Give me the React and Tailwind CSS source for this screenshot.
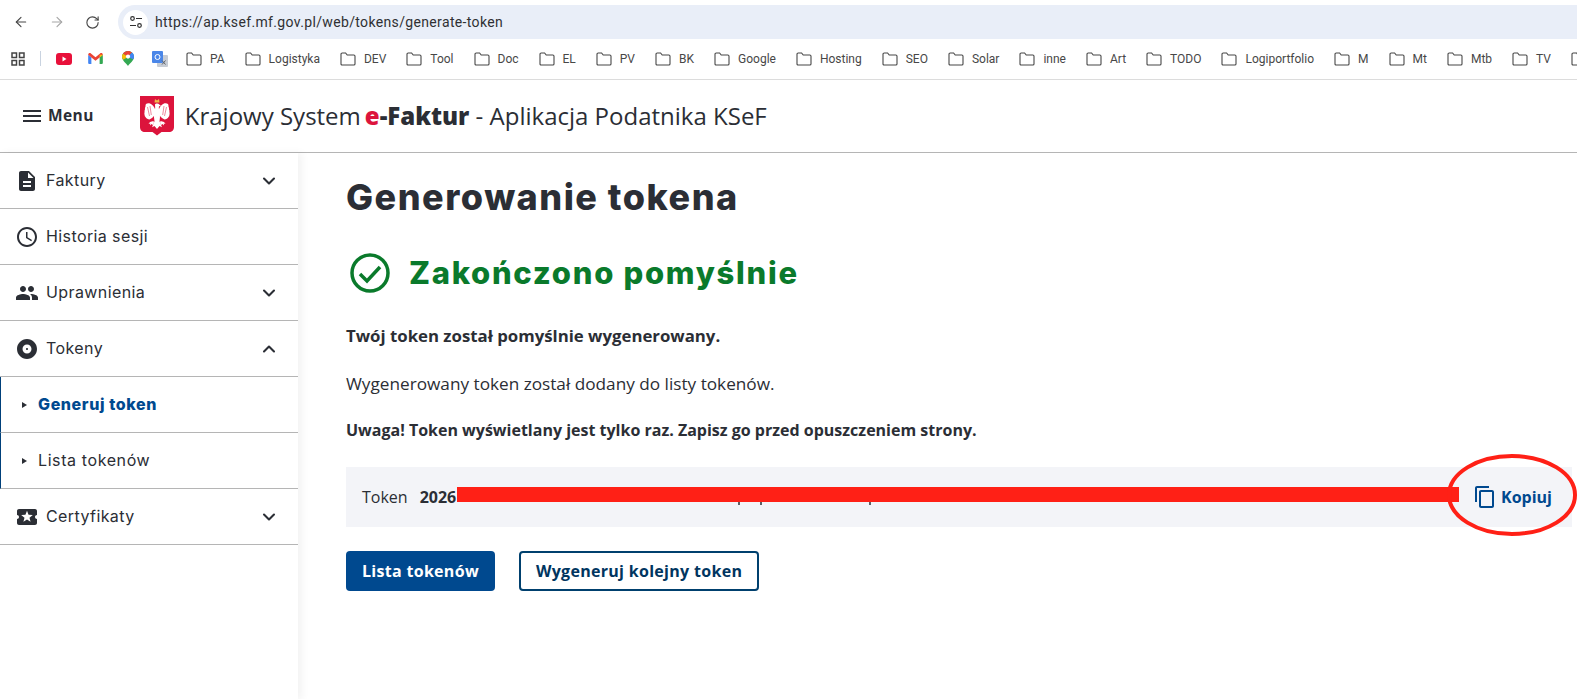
import React from 'react';
import { ArrowLeft, ArrowRight, RotateCw, ChevronDown, ChevronUp } from 'lucide-react';

const bookmarks = ['PA', 'Logistyka', 'DEV', 'Tool', 'Doc', 'EL', 'PV', 'BK', 'Google', 'Hosting', 'SEO', 'Solar', 'inne', 'Art', 'TODO', 'Logiportfolio', 'M', 'Mt', 'Mtb', 'TV'];

const Mi = ({ d, className }) => (
  <svg viewBox="0 0 24 24" fill="currentColor" className={className}><path d={d} /></svg>
);

const icons = {
  menu: 'M3 18h18v-2H3v2zm0-5h18v-2H3v2zm0-7v2h18V6H3z',
  doc: 'M14 2H6c-1.1 0-1.99.9-1.99 2L4 20c0 1.1.89 2 1.99 2H18c1.1 0 2-.9 2-2V8l-6-6zm2 16H8v-2h8v2zm0-4H8v-2h8v2zm-3-5V3.5L18.5 9H13z',
  clock: 'M11.99 2C6.47 2 2 6.48 2 12s4.47 10 9.99 10C17.52 22 22 17.52 22 12S17.52 2 11.99 2zM12 20c-4.42 0-8-3.58-8-8s3.58-8 8-8 8 3.58 8 8-3.58 8-8 8zm.5-13H11v6l5.25 3.15.75-1.23-4.5-2.67z',
  people: 'M16 11c1.66 0 2.99-1.34 2.99-3S17.66 5 16 5c-1.66 0-3 1.34-3 3s1.34 3 3 3zm-8 0c1.66 0 2.99-1.34 2.99-3S9.66 5 8 5C6.34 5 5 6.34 5 8s1.34 3 3 3zm0 2c-2.33 0-7 1.17-7 3.5V19h14v-2.5c0-2.33-4.67-3.5-7-3.5zm8 0c-.29 0-.62.02-.97.05 1.16.84 1.97 1.97 1.97 3.45V19h6v-2.5c0-2.33-4.67-3.5-7-3.5z',
  album: 'M12 2C6.48 2 2 6.48 2 12s4.48 10 10 10 10-4.48 10-10S17.52 2 12 2zm0 14.5c-2.49 0-4.5-2.01-4.5-4.5S9.51 7.5 12 7.5s4.5 2.01 4.5 4.5-2.01 4.5-4.5 4.5zm0-5.5c-.55 0-1 .45-1 1s.45 1 1 1 1-.45 1-1-.45-1-1-1z',
  ticket: 'M20 12c0-1.1.9-2 2-2V6c0-1.1-.9-2-2-2H4c-1.1 0-1.99.9-1.99 2v4c1.1 0 1.99.9 1.99 2s-.89 2-2 2v4c0 1.1.9 2 2 2h16c1.1 0 2-.9 2-2v-4c-1.1 0-2-.9-2-2zm-4.42 4.8L12 14.5l-3.58 2.3 1.08-4.12-3.29-2.69 4.24-.25L12 5.8l1.54 3.95 4.24.25-3.29 2.69 1.09 4.11z',
  copy: 'M16 1H4c-1.1 0-2 .9-2 2v14h2V3h12V1zm3 4H8c-1.1 0-2 .9-2 2v14c0 1.1.9 2 2 2h11c1.1 0 2-.9 2-2V7c0-1.1-.9-2-2-2zm0 16H8V7h11v14z',
};

const menu = [
  { label: 'Faktury', icon: icons.doc, chevron: 'down' },
  { label: 'Historia sesji', icon: icons.clock },
  { label: 'Uprawnienia', icon: icons.people, chevron: 'down' },
  { label: 'Tokeny', icon: icons.album, chevron: 'up' },
  { label: 'Generuj token', sub: true, active: true },
  { label: 'Lista tokenów', sub: true },
  { label: 'Certyfikaty', icon: icons.ticket, chevron: 'down' },
];

const FolderIcon = () => (
  <svg viewBox="0 0 16 14" className="w-[16px] h-[14px] shrink-0" fill="none" stroke="#474747" strokeWidth="1.1">
    <path d="M1 12V2.2C1 1.500 1.500 1 2.200 1h3.400l1.600 2h6.600c.7 0 1.200.5 1.200 1.200V12c0 .6-.5 1-1.200 1H2.200C1.500 13 1 12.600 1 12z" />
  </svg>
);

// wing is drawn once and mirrored around the shield's middle
const Wing = ({ flip }) => (
  <g transform={flip ? 'translate(34 0) scale(-1 1)' : undefined}>
    <path d="M15 13c-1-2.500-2.500-4.500-5-5.500-1.500-.5-3-.3-4 .6-.6 1-.4 1.800-.6 3-.6.8-.4 1.600-.5 2.600-.5.8-.3 1.700-.3 2.600-.4.8-.2 1.700 0 2.600 0 .8.4 1.500.9 2.200.3.8.9 1.300 1.700 1.700.7.5 1.500.6 2.300.6l2.500-1.500 3-3z" fill="#fff" />
    <path d="M7.500 11l2 9M10 10l1.300 9" stroke="#dc143c" strokeWidth=".5" fill="none" />
    <path d="M13.500 25l-3.500 1-1.500 2 1.800-.4-.3 2 1.700-1.500 1 1 1.300-2z" fill="#fff" />
  </g>
);

const Emblem = () => (
  <svg viewBox="0 0 34 40" className="w-[34px] h-[40px] shrink-0">
    <path d="M0 0h34v31c0 3-2 5-5 5h-7.500L17 39.500 12.500 36H5c-3 0-5-2-5-5z" fill="#dc143c" />
    <path d="M14.500 6.500l.5-3.500 2 1.500 2-1.500.5 3.500z" fill="#f2b84b" />
    <Wing />
    <Wing flip />
    <path d="M15 8.500c.8-1.300 3.400-1.300 4.300 0l1.700 1.500-2 .3-.2 2c1.200 3 1.700 8 .7 13l2.500 6-2.500-1.200-2.500 3-2.500-3-2.500 1.200 2.500-6c-1-5-.5-10 .7-13z" fill="#fff" />
  </svg>
);

const App = () => {
  return (
    <div className="relative h-[699px] overflow-hidden bg-white text-[#2b2e35] font-['Open_Sans',sans-serif]">
      {/* Browser chrome */}
      <div className="flex items-center h-[44px] pl-[13px]">
        <ArrowLeft className="w-[16px] h-[16px] text-[#474747] mr-[20px]" strokeWidth={1.7} />
        <ArrowRight className="w-[16px] h-[16px] text-[#a6a6a6] mr-[20px]" strokeWidth={1.7} />
        <RotateCw className="w-[15px] h-[15px] text-[#474747] mr-[18px]" strokeWidth={1.8} />
        <div className="flex items-center flex-1 h-[34px] rounded-l-full bg-[#e9eef8] pl-[5px]">
          <div className="flex items-center justify-center w-[25px] h-[25px] rounded-full bg-white">
            <svg viewBox="0 0 14 14" className="w-[14px] h-[14px]" fill="none" stroke="#303030" strokeWidth="1.200">
              <circle cx="3.500" cy="3.500" r="1.800" /><path d="M7 3.500h6M1 10.500h6" /><circle cx="10.500" cy="10.500" r="1.800" />
            </svg>
          </div>
          <span className="ml-[7px] text-[14px] text-[#2f3033] font-['Roboto',sans-serif] tracking-[0.35px]">https://ap.ksef.mf.gov.pl/web/tokens/generate-token</span>
        </div>
      </div>
      <div className="flex items-center h-[36px] pb-[6px] pl-[11px] border-b border-[#dcdcdc] overflow-hidden whitespace-nowrap font-['Roboto',sans-serif] text-[12px] text-[#474747]">
        <svg viewBox="0 0 14 14" className="w-[14px] h-[14px] shrink-0" fill="none" stroke="#444" strokeWidth="1.500">
          <rect x="1" y="1" width="4.500" height="4.500" /><rect x="8.500" y="1" width="4.500" height="4.500" />
          <rect x="1" y="8.500" width="4.500" height="4.500" /><rect x="8.500" y="8.500" width="4.500" height="4.500" />
        </svg>
        <div className="w-[1px] h-[15px] bg-[#c9d3e0] ml-[15px] mr-[15px] shrink-0" />
        <svg viewBox="0 0 16 12" className="w-[16px] h-[12px] shrink-0 mr-[16px]">
          <rect width="16" height="12" rx="3" fill="#e8103a" /><path d="M6.500 3.500l4 2.500-4 2.500z" fill="#fff" />
        </svg>
        <svg viewBox="0 0 16 12" className="w-[15px] h-[11px] shrink-0 mr-[19px]">
          <path d="M0 2v9c0 .6.4 1 1 1h2.500V5z" fill="#4285f4" /><path d="M12.500 5v7H15c.6 0 1-.4 1-1V2z" fill="#34a853" />
          <path d="M0 2c0-2 2-2.500 3-1.500L8 4.500 13 .5C14-.5 16 0 16 2l-3.500 3L8 8.500 3.500 5z" fill="#ea4335" /><path d="M12.500 1.800L16 2l-3.500 3z" fill="#fbbc04" />
        </svg>
        <svg viewBox="0 0 12 15" className="w-[12px] h-[15px] shrink-0 mr-[18px]">
          <path d="M6 0C2.700 0 0 2.500 0 5.700 0 9.500 4.500 12.500 6 15c1.500-2.500 6-5.500 6-9.300C12 2.500 9.300 0 6 0z" fill="#34a853" />
          <path d="M1 2.800C2 1 3.900 0 6 0c1.500 0 3 .6 4 1.600L6 5.700z" fill="#ea4335" /><path d="M10 1.600c1.300 1 2 2.500 2 4.100 0 1-.3 2-.9 2.800L6 5.700z" fill="#4285f4" />
          <path d="M0 5.700C0 4.600.4 3.600 1 2.800l5 2.900-4.600 3.100C.6 7.700 0 6.800 0 5.700z" fill="#fbbc04" /><circle cx="6" cy="5.600" r="2.100" fill="#fff" />
        </svg>
        <svg viewBox="0 0 16 16" className="w-[16px] h-[16px] shrink-0 mr-[18px]">
          <rect x="5" y="4" width="11" height="12" rx="1" fill="#c7ccd4" /><rect width="11" height="12" rx="1" fill="#4a86e8" />
          <circle cx="5.500" cy="6" r="2.500" stroke="#fff" strokeWidth="1" fill="none" /><path d="M10 9.500l3.500 4M13.500 9.500l-3.500 4" stroke="#5f6368" strokeWidth="1" />
        </svg>
        <div className="flex items-center gap-[20px]">
          {bookmarks.map((b) => (
            <div key={b} className="flex items-center gap-[8px]">
              <FolderIcon />
              <span>{b}</span>
            </div>
          ))}
          <FolderIcon />
        </div>
      </div>

      {/* App header */}
      <header className="flex items-center h-[73px] pl-[20px] border-b border-[#b5b5b5]">
        <Mi d={icons.menu} className="w-[24px] h-[24px] shrink-0" />
        <span className="ml-[4px] text-[15.500px] font-bold tracking-[0.4px]">Menu</span>
        <div className="ml-[46px]"><Emblem /></div>
        <div className="ml-[11px] text-[24px] whitespace-nowrap">
          Krajowy System<span className="ml-[4px] font-extrabold"><span className="text-[#dc143c]">e</span>-Faktur</span> - Aplikacja Podatnika KSeF
        </div>
      </header>

      <div className="flex">
        {/* Sidebar */}
        <nav className="w-[298px] h-[547px] shrink-0 shadow-[4px_0_8px_rgba(0,0,0,0.05)] font-['Inter',sans-serif]">
          {menu.map((item) => (
            <div
              key={item.label}
              className={`flex items-center h-[56px] border-b border-[#b5b5b5] ${item.sub ? 'border-l-[1px] border-l-[#00407a] pl-[21px]' : 'pl-[15px]'} pr-[19px]`}
            >
              {item.sub ? (
                <>
                  <span className="w-0 h-0 border-y-[3px] border-y-transparent border-l-[5px] border-l-[#2b2e35]" />
                  <span className={`ml-[11px] pb-[2px] text-[16px] ${item.active ? 'font-extrabold text-[#00498f] tracking-[0.6px]' : 'tracking-[0.6px]'}`}>{item.label}</span>
                </>
              ) : (
                <>
                  <Mi d={item.icon} className="w-[24px] h-[24px] shrink-0" />
                  <span className="ml-[7px] pb-[2px] text-[16px] tracking-[0.4px]">{item.label}</span>
                  {item.chevron === 'down' && <ChevronDown className="ml-auto w-[20px] h-[20px]" strokeWidth={2.500} />}
                  {item.chevron === 'up' && <ChevronUp className="ml-auto w-[20px] h-[20px]" strokeWidth={2.500} />}
                </>
              )}
            </div>
          ))}
        </nav>

        {/* Content */}
        <main className="flex-1 pl-[48px] pr-[5px]">
          <h1 className="mt-[20px] text-[36px] leading-[48px] font-extrabold tracking-[1.5px] font-['Inter',sans-serif]">Generowanie tokena</h1>
          <div className="flex items-center mt-[32px]">
            <svg viewBox="0 0 40 40" className="ml-[4px] w-[40px] h-[40px] shrink-0" fill="none" stroke="#0a7a2b" strokeWidth="3.500">
              <circle cx="20" cy="20" r="18" /><path d="M10 21l7 7 13-14" />
            </svg>
            <h2 className="ml-[19px] text-[31px] leading-[40px] font-extrabold tracking-[1.7px] text-[#0a7a2b] font-['Inter',sans-serif]">Zakończono pomyślnie</h2>
          </div>
          <p className="mt-[31px] text-[16.800px] leading-[24px] font-bold">Twój token został pomyślnie wygenerowany.</p>
          <p className="mt-[24px] text-[17.200px] leading-[24px]">Wygenerowany token został dodany do listy tokenów.</p>
          <p className="mt-[22px] text-[16px] leading-[24px] font-bold">Uwaga! Token wyświetlany jest tylko raz. Zapisz go przed opuszczeniem strony.</p>
          <div className="flex items-center h-[60px] mt-[25px] pl-[16px] pr-[20px] bg-[#f3f4f8] text-[16px]">
            <span>Token</span>
            <span className="ml-[12px] font-bold">2026</span>
            <button className="ml-auto flex items-center gap-[4px] font-bold text-[#00498f]">
              <Mi d={icons.copy} className="w-[24px] h-[24px]" />
              Kopiuj
            </button>
          </div>
          <div className="flex gap-[24px] mt-[24px]">
            <button className="h-[40px] px-[16px] rounded-[4px] bg-[#00498f] text-white font-bold text-[16px] tracking-[0.3px]">Lista tokenów</button>
            <button className="h-[40px] px-[15px] rounded-[4px] border-2 border-[#00406e] text-[#00355f] font-bold text-[16px] tracking-[0.3px]">Wygeneruj kolejny token</button>
          </div>
        </main>
      </div>

      {/* Annotation drawn over the screenshot */}
      <svg className="absolute left-0 top-0 pointer-events-none" width="1577" height="699" fill="none">
        <path d="M739 500v5M761 500v5M870 500v5" stroke="#2b2e35" strokeWidth="1.500" />
        <path d="M457 487h1002v15H457z" fill="#ff2016" />
        <ellipse cx="1512" cy="495" rx="63" ry="39" stroke="#ff2016" strokeWidth="4" />
      </svg>
    </div>
  );
};

export default App;
